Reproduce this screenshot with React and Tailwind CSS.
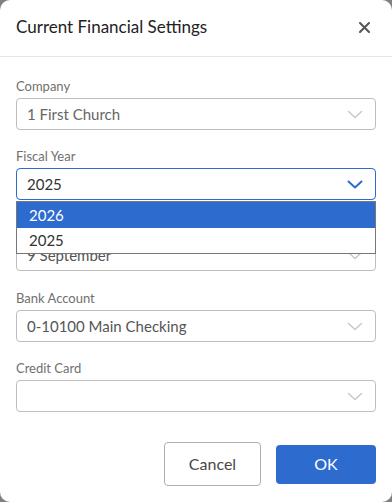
import React from "react";

function Chevron({ focused }) {
  return (
    <svg width="16" height="9" viewBox="0 0 16 9" fill="none" className="shrink-0">
      <path
        d="M1.5 1.5 L8 7.5 L14.5 1.5"
        stroke={focused ? "#2d6bcf" : "#c8c8c8"}
        strokeWidth={focused ? 2 : 1.5}
        strokeLinecap="round"
        strokeLinejoin="round"
      />
    </svg>
  );
}

function Field({ label, value, focused, valueClass, className = "" }) {
  return (
    <div className={"flex flex-col " + className}>
      <div className="h-[20px] text-[13px] leading-[20px] text-[#707070] mb-[2px]">{label}</div>
      <div
        className={
          "h-[32px] rounded-[4px] border flex items-center justify-between pl-[10px] pr-[12px] " +
          (focused ? "border-[#2d6bcf]" : "border-[#bdbdbd]")
        }
      >
        <span className={"text-[15px] leading-[20px] " + (valueClass || "text-[#555]")}>{value}</span>
        <Chevron focused={focused} />
      </div>
    </div>
  );
}

export default function App() {
  return (
    <div className="w-[392px] h-[502px] bg-[#808080] font-['Lato',sans-serif]">
      <div className="h-full bg-white rounded-[10px] flex flex-col relative">
        <div className="h-[57px] border-b border-[#e6e6e6] flex items-center justify-between pl-4 pr-[22px] shrink-0">
          <div className="text-[17px] text-[#222] pb-[2px]">Current Financial Settings</div>
          <svg width="11" height="11" viewBox="0 0 11 11" className="mb-[2px]">
            <path d="M1 1 L10 10 M10 1 L1 10" stroke="#555" strokeWidth="2" strokeLinecap="round" />
          </svg>
        </div>
        <div className="px-4 pt-[19px] flex flex-col gap-[16px] relative">
          <Field label="Company" value="1 First Church" valueClass="text-[#666]" />
          <div className="relative">
            <Field label="Fiscal Year" value="2025" focused valueClass="text-[#333]" />
            <div className="absolute left-0 right-0 top-[55px] border border-[#777] bg-white z-10">
              <div className="h-[26px] bg-[#2d6bcf] text-white text-[15px] flex items-center pl-[12px]">2026</div>
              <div className="h-[25px] text-[#333] text-[15px] flex items-center pl-[12px]">2025</div>
            </div>
          </div>
          <Field label="" value="9 September" className="mt-[1px]" />
          <Field label="Bank Account" value="0-10100 Main Checking" className="mt-[1px]" />
          <Field label="Credit Card" value="" />
        </div>
        <div className="mt-auto flex justify-end items-center gap-[15px] px-4 pb-4">
          <button className="w-[97px] h-[44px] border border-[#b0b0b0] rounded-[4px] text-[16px] text-[#484848] bg-white">
            Cancel
          </button>
          <button className="w-[100px] h-[39px] rounded-[4px] bg-[#2d6bcf] text-white text-[16px]">OK</button>
        </div>
      </div>
    </div>
  );
}
